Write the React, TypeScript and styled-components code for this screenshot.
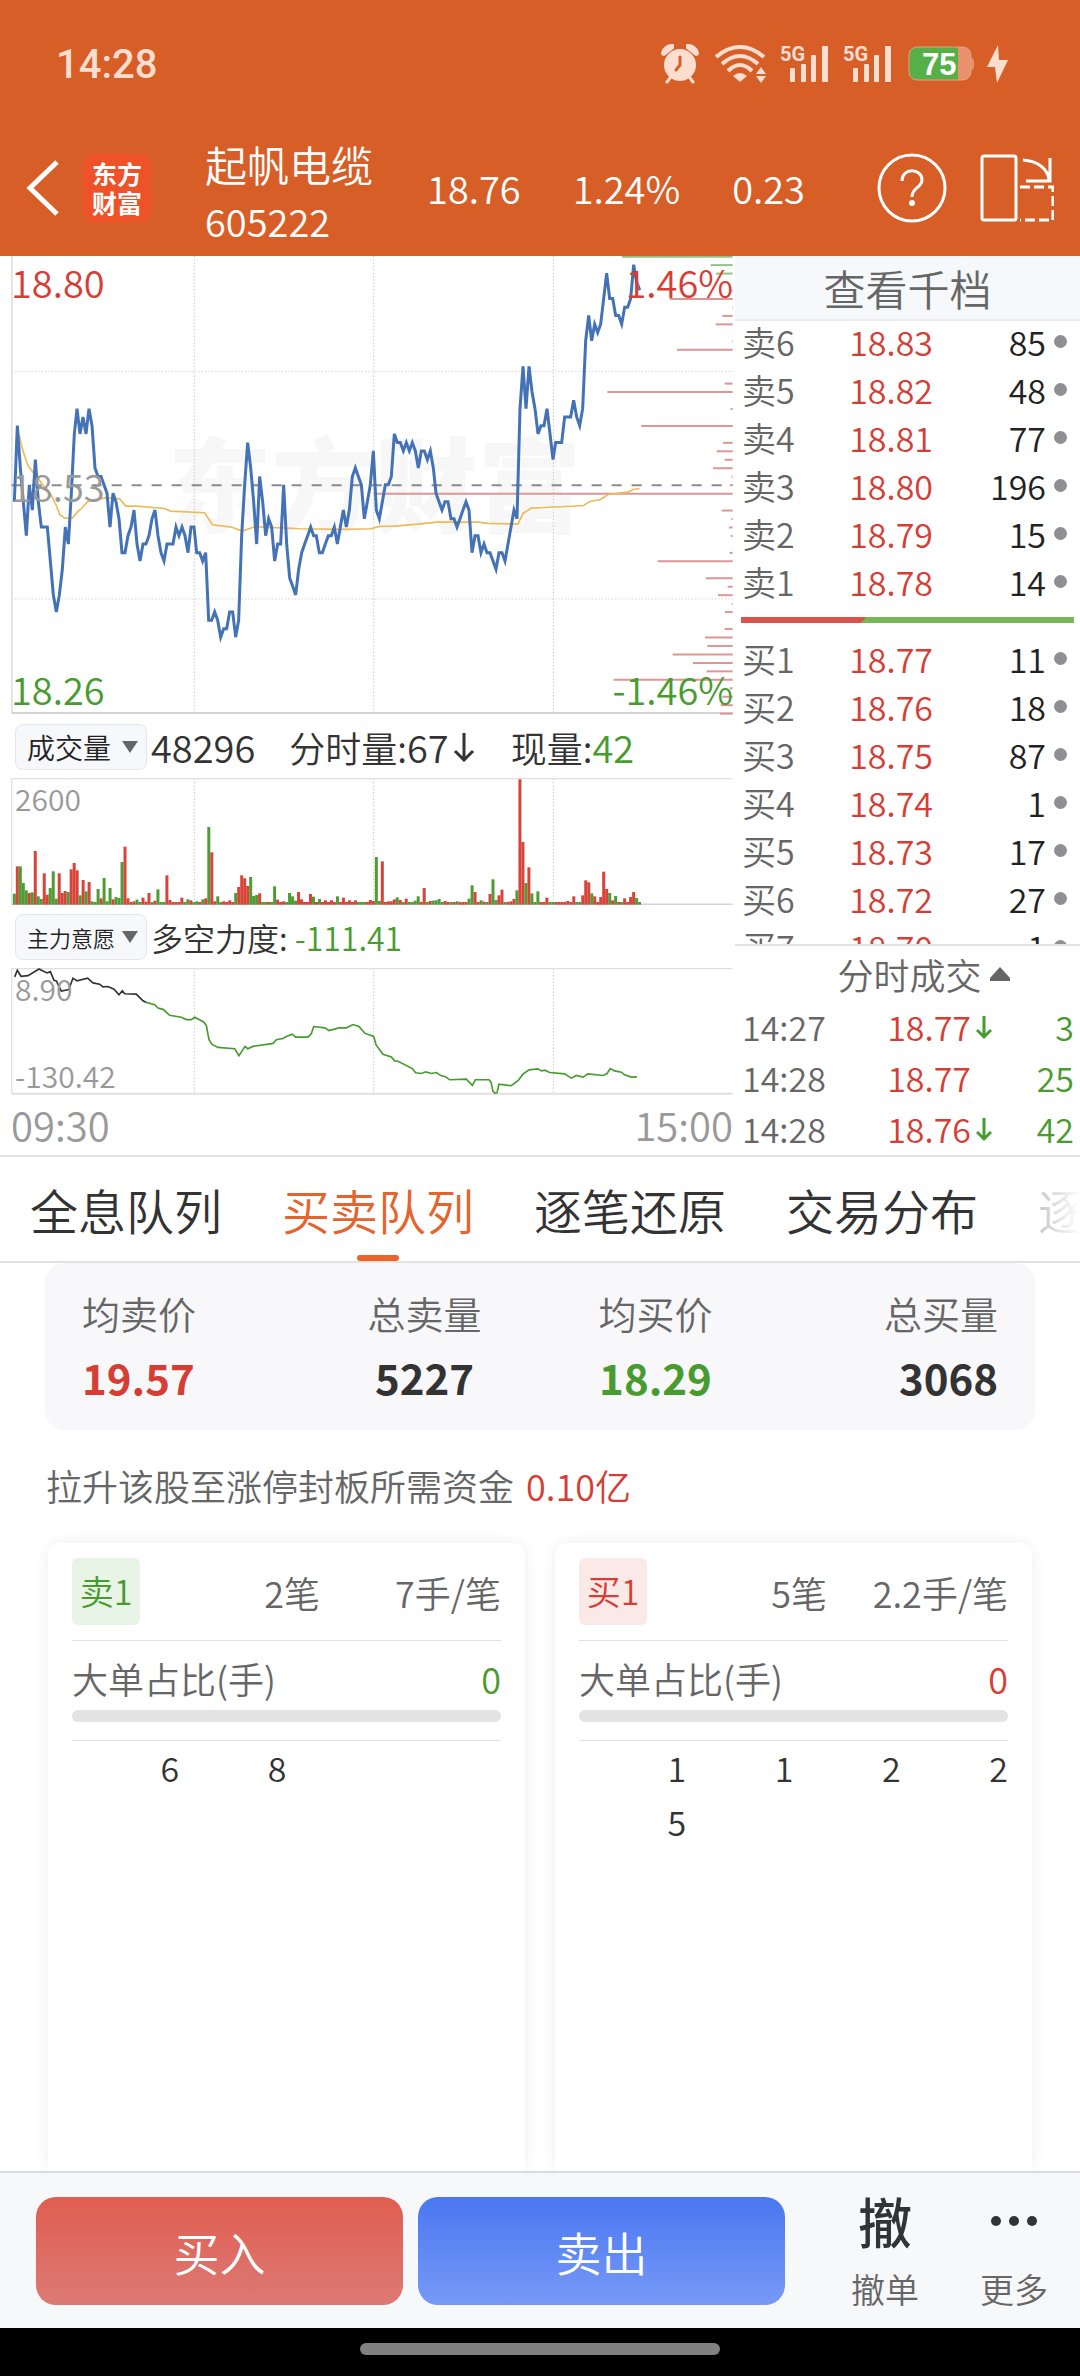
import React from "react";
import styled, { createGlobalStyle } from "styled-components";

const RED = "#d63d34";
const GREEN = "#489b2f";
const DARK = "#333333";
const GREY = "#666666";
const PALE = "#999999";
const LINE = "#e2e2e2";
const CREAM = "#fbded0";

const GlobalStyle = createGlobalStyle`
  *, *::before, *::after { box-sizing: border-box; }
  html, body { margin: 0; padding: 0; background: #ffffff; }
  body, button, select, table {
    font-family: "Noto Sans CJK SC", "Noto Sans", sans-serif;
    font-weight: 350;
  }
  button { margin: 0; padding: 0; border: 0; background: none; color: inherit; cursor: pointer; }
  ul, dl, dd, p, h1 { margin: 0; padding: 0; list-style: none; font-weight: inherit; }
  table { border-collapse: collapse; width: 100%; table-layout: fixed; }
  th, td { padding: 0; font-weight: inherit; }
  svg { display: block; }
`;

/* ---------- market data ---------- */

/* price of each minute, in cents away from the previous close */
const PREV_CLOSE = 18.53;
const PRICES = [
  -2, 7, 2, -2, -6, 0, -3, 3, -2, -5, -5, -5, -9, -13, -15, -13, -10, -5, -7, -1,
  6, 9, 6, 8, 6, 9, 7, 2, 1, 1, 0, -1, -5, -1, -2, -4, -8, -8, -6, -5,
  -3, -7, -9, -7, -7, -6, -4, -3, -6, -8, -9, -7, -7, -7, -5, -6, -5, -6, -8, -5,
  -5, -8, -8, -9, -8, -16, -16, -15, -16, -18, -17, -17, -15, -15, -18, -16, -6, 0, 5, 2,
  -2, -7, 1, -2, -6, -4, -5, -9, -7, -7, 0, -7, -11, -12, -13, -10, -8, -7, -6, -5,
  -6, -6, -8, -8, -7, -6, -6, -5, -7, -5, -3, -5, -3, 1, 2, 1, 0, -4, -2, 0,
  4, -3, -4, -2, 0, 0, 1, 6, 5, 5, 4, 5, 4, 5, 4, 2, 4, 4, 3, 4,
  2, -1, -2, -3, -2, -2, -4, -4, -5, -4, -3, -2, -3, -8, -6, -6, -8, -7, -8, -8,
  -9, -10, -8, -8, -9, -7, -5, -3, -4, 9, 14, 9, 14, 11, 9, 6, 7, 7, 9, 6,
  3, 5, 5, 5, 8, 8, 8, 10, 8, 7, 9, 17, 20, 17, 19, 18, 19, 22, 25, 22,
  22, 20, 20, 19, 21, 21, 22, 26, 24, 23,
];

const AVERAGE =
  "58,555 66,590 75,620 86,650 100,668 118,690 128,705 145,722 155,738 170,768 180,795 195,806 218,806 235,786 248,775 262,758 275,752 318,745 360,748 378,770 410,770 495,777 512,785 615,790 638,826 695,833 728,845 765,832 860,836 900,838 1040,840 1113,838 1140,831 1185,830 1255,824 1312,818 1435,818 1465,822 1555,824 1570,792 1595,776 1685,772 1752,768 1770,756 1802,750 1825,735 1885,728 1900,720 1920,717";

/* traded volume by price level: [level in cents, bar length] */
const LEVELS: [number, number][] = [
  [27, 332], [26, 66], [25, 50], [23, 4], [22, 189], [21, 2], [20, 31], [19, 51], [17, 2], [16, 167],
  [12, 24], [11, 376], [9, 6], [7, 274], [5, 29], [4, 48], [3, 24], [2, 59], [1, 3], [0, 9],
  [-1, 1077], [-3, 33], [-4, 4], [-5, 11], [-6, 6], [-8, 9], [-9, 225], [-11, 81], [-12, 15], [-13, 44],
  [-14, 3], [-15, 23], [-17, 24], [-18, 83], [-19, 76], [-20, 180], [-21, 119], [-22, 78], [-23, 357],
  [-24, 9], [-25, 31], [-26, 36], [-27, 38],
];

/* volume per minute: colour letter and bar height */
const VOLUMES = (
  "g33 r115 g115 g65 g43 r35 g37 r161 g25 g17 r94 r30 g50 g100 g18 r94 r35 r41 g38 r106 " +
  "r125 r103 g28 r74 g40 r68 g10 g8 g47 r19 g80 g10 g50 r16 g23 g20 g128 r174 r19 r8 " +
  "r10 g15 g8 r21 r9 r35 g8 r12 g46 g8 g8 r88 r14 r8 r8 r8 r21 g8 g16 r13 " +
  "g8 g10 r8 g16 r19 g233 r157 r10 g25 g8 r10 r8 r13 r8 g35 r53 r88 r79 r56 g83 " +
  "g26 g29 r34 g8 g8 r8 g8 g55 r15 r8 r10 g8 g35 g25 g12 r38 r16 r8 r8 r32 " +
  "g24 r8 g17 r8 r13 r8 r13 r8 g25 r8 r21 r8 r13 r8 r13 g8 g8 g8 r8 r14 " +
  "r11 g143 g11 r130 r8 r10 r10 r16 g22 r14 g8 r18 g8 g8 g12 g25 r8 r50 g8 r11 " +
  "g12 g13 g17 g8 r11 r8 g8 r8 g10 r8 r8 r8 g18 g58 r38 r8 g13 r9 g8 r32 " +
  "g76 g14 r28 r45 g8 r8 r10 r17 g43 r376 r188 g65 r112 g34 g8 g40 r8 r8 r21 g8 " +
  "g8 r8 r8 r8 r8 r11 r8 r25 g8 g8 r28 r73 r67 g34 r25 r8 r23 r99 r47 g35 " +
  "r13 g26 r8 g8 r19 r8 r23 r38 g20 g8"
).split(" ");

const WILL_POSITIVE =
  "45,828 53,808 64,826 85,824 118,804 142,816 152,812 163,838 170,840 185,871 208,866 213,850 220,832 232,840 264,832 280,846 300,850 310,858 325,857 343,865 358,882 368,870 375,879 410,880 430,900 440,905";
const WILL_NEGATIVE =
  "440,905 465,912 475,922 490,926 510,944 545,950 560,957 575,957 585,950 612,964 620,975 628,1018 637,1032 655,1041 705,1045 718,1066 736,1038 744,1045 760,1038 820,1029 830,1018 850,1014 860,1008 878,1001 888,1010 925,1010 935,1000 942,978 975,982 988,990 1018,982 1040,982 1060,972 1078,978 1095,998 1122,1008 1130,1035 1150,1062 1175,1070 1185,1082 1195,1083 1238,1105 1248,1118 1265,1120 1278,1115 1295,1120 1310,1117 1325,1127 1338,1130 1350,1139 1400,1137 1418,1156 1427,1139 1468,1139 1474,1146 1480,1174 1486,1180 1492,1178 1498,1152 1535,1157 1555,1142 1570,1122 1588,1109 1615,1106 1625,1112 1635,1110 1650,1117 1695,1121 1715,1134 1730,1126 1750,1131 1765,1121 1810,1126 1822,1120 1832,1105 1845,1112 1865,1116 1875,1124 1895,1131 1912,1130";

const ASKS = [
  ["卖6", "18.83", "85"], ["卖5", "18.82", "48"], ["卖4", "18.81", "77"],
  ["卖3", "18.80", "196"], ["卖2", "18.79", "15"], ["卖1", "18.78", "14"],
];
const BIDS = [
  ["买1", "18.77", "11"], ["买2", "18.76", "18"], ["买3", "18.75", "87"], ["买4", "18.74", "1"],
  ["买5", "18.73", "17"], ["买6", "18.72", "27"], ["买7", "18.70", "1"],
];
const TRADES = [
  { time: "14:27", price: "18.77", down: true, volume: "3" },
  { time: "14:28", price: "18.77", down: false, volume: "25" },
  { time: "14:28", price: "18.76", down: true, volume: "42" },
];
const TABS = ["全息队列", "买卖队列", "逐笔还原", "交易分布", "逐笔成交"];

/* ---------- page ---------- */

const Page = styled.div`
  display: flex;
  flex-direction: column;
  min-height: 100vh;
  overflow: hidden;
  color: ${DARK};
  background: #ffffff;
`;

const Top = styled.header`
  background: #d75e27;
  color: #ffffff;
`;

const StatusBar = styled.div`
  display: flex;
  align-items: center;
  height: 128px;
  padding: 0 72px 0 56px;
  color: ${CREAM};
`;

const Clock = styled.time`
  margin-right: auto;
  font-family: Roboto, sans-serif;
  font-size: 40px;
  font-weight: 500;
`;

const StatusIcons = styled.div`
  display: flex;
  align-items: center;
`;

const StatusIcon = styled.svg<{ $gap: number }>`
  margin-left: ${(p) => p.$gap}px;
`;

const TitleBar = styled.div`
  display: flex;
  align-items: center;
  height: 128px;
  padding: 0 26px 8px;
`;

const Logo = styled.div`
  display: grid;
  place-content: center;
  width: 68px;
  height: 68px;
  margin-left: 23px;
  border-radius: 12px;
  background: #ee5229;
  font-size: 25px;
  font-weight: 700;
  line-height: 29px;
`;

const StockName = styled.div`
  margin-left: 54px;
  padding-top: 8px;
`;

const Name = styled.h1`
  font-size: 42px;
  line-height: 58px;
`;

const Code = styled.p`
  font-size: 38px;
  line-height: 56px;
`;

const Quotes = styled.div`
  display: flex;
  flex: 1;
  justify-content: space-between;
  padding: 0 72px 0 54px;
  font-size: 38px;
  line-height: 56px;
`;

const IconButton = styled.button`
  display: block;
  & + & { margin-left: 33px; }
`;

/* ---------- market area ---------- */

const Market = styled.section`
  display: grid;
  grid-template-columns: minmax(0, 735fr) minmax(0, 345fr);
  border-bottom: 2px solid ${LINE};
`;

const Charts = styled.div`
  padding: 0 2px 0 11px;
`;

const Plot = styled.div<{ $height: number }>`
  position: relative;
  height: ${(p) => p.$height}px;
  > svg { width: 100%; height: 100%; }
`;

type Corner = "tl" | "tr" | "ml" | "bl" | "br";
const CORNERS: Record<Corner, string> = {
  tl: "left: 0; top: 0;",
  tr: "right: 0; top: 0;",
  ml: "left: 0; top: 50%; transform: translateY(-50%);",
  bl: "left: 0; bottom: 0;",
  br: "right: 0; bottom: 0;",
};

const PlotLabel = styled.span<{ $at: Corner; $color: string; $small?: boolean }>`
  position: absolute;
  ${(p) => CORNERS[p.$at]}
  color: ${(p) => p.$color};
  font-size: ${(p) => (p.$small ? 30 : 38)}px;
  line-height: ${(p) => (p.$small ? 40 : 52)}px;
  padding-left: ${(p) => (p.$small ? 4 : 0)}px;
`;

const IndicatorRow = styled.div<{ $size: number }>`
  display: flex;
  align-items: center;
  height: 63px;
  padding-left: 4px;
  font-size: ${(p) => p.$size}px;
  line-height: 54px;
  white-space: nowrap;
`;

const Picker = styled.label`
  position: relative;
  display: block;
  flex: none;
  width: 132px;
  height: 46px;
  margin-right: 4px;
  > svg { position: absolute; right: 9px; top: 17px; pointer-events: none; }
`;

const PickerSelect = styled.select<{ $size: number }>`
  display: block;
  width: 100%;
  height: 100%;
  padding: 0 0 0 11px;
  appearance: none;
  border: 1px solid #e3e6ea;
  border-radius: 8px;
  background: #f6f8fb;
  color: #222222;
  font-size: ${(p) => p.$size}px;
`;

const Reading = styled.span`
  display: flex;
  align-items: center;
  margin-right: 34px;
`;

const Figure = styled.span<{ $color?: string }>`
  color: ${(p) => p.$color ?? "inherit"};
  font-size: 38px;
`;

const Tone = styled.span<{ $color: string }>`
  color: ${(p) => p.$color};
`;

const TimeAxis = styled.div`
  display: flex;
  justify-content: space-between;
  height: 60px;
  color: ${PALE};
  font-size: 40px;
  line-height: 58px;
`;

const Side = styled.aside`
  display: flex;
  flex-direction: column;
  min-height: 0;
`;

const DepthButton = styled.button`
  flex: none;
  height: 65px;
  border-bottom: 2px solid #ececee;
  background: #f6f8fb;
  color: ${GREY};
  font-size: 42px;
  line-height: 62px;
`;

const Book = styled.div`
  flex: 1 1 0;
  min-height: 0;
  padding: 0 6px;
  overflow: hidden;
`;

const BookRow = styled.tr`
  height: 48px;
  font-size: 34px;
  line-height: 42px;
`;

const Cell = styled.td<{ $color: string; $width?: number; $right?: boolean }>`
  width: ${(p) => (p.$width ? p.$width + "px" : "auto")};
  padding-left: ${(p) => (p.$right ? 0 : 1)}px;
  color: ${(p) => p.$color};
  text-align: ${(p) => (p.$right ? "right" : "left")};
  vertical-align: top;
`;

const DotCell = styled.td`
  width: 28px;
  vertical-align: top;
  &::after {
    content: "";
    display: block;
    width: 13px;
    height: 13px;
    margin: 14px 0 0 8px;
    border-radius: 50%;
    background: #8f8f94;
  }
`;

const RatioBar = styled.div`
  height: 6px;
  margin: 8px 0 15px;
  background: linear-gradient(135deg, #d9534d 37%, #77b755 37%);
`;

const TradesTitle = styled.button`
  display: flex;
  flex: none;
  align-items: center;
  justify-content: center;
  gap: 8px;
  height: 58px;
  padding-left: 32px;
  border-top: 2px solid ${LINE};
  color: ${GREY};
  font-size: 36px;
`;

const Trades = styled.div`
  padding: 0 6px;
`;

const TradeRow = styled.tr`
  height: 51px;
  font-size: 34px;
  line-height: 50px;
`;

const ArrowCell = styled.td`
  width: 24px;
  padding: 14px 0 0 5px;
  vertical-align: top;
`;

/* ---------- tabs ---------- */

const Tabs = styled.nav`
  position: relative;
  display: flex;
  gap: 60px;
  height: 106px;
  padding-left: 30px;
  overflow: hidden;
  border-bottom: 2px solid ${LINE};
  &::after {
    content: "";
    position: absolute;
    inset: 0 0 0 auto;
    width: 60px;
    background: linear-gradient(90deg, rgba(255, 255, 255, 0.6), #ffffff);
    pointer-events: none;
  }
`;

const Tab = styled.button<{ $active: boolean }>`
  position: relative;
  flex: none;
  color: ${(p) => (p.$active ? "#e5642d" : DARK)};
  font-size: 48px;
  line-height: 104px;
  padding-bottom: 4px;
  white-space: nowrap;
  &::after {
    content: "";
    display: ${(p) => (p.$active ? "block" : "none")};
    position: absolute;
    left: 50%;
    bottom: 0;
    width: 42px;
    height: 6px;
    margin-left: -21px;
    border-radius: 3px;
    background: #ea642b;
  }
`;

/* ---------- queue ---------- */

const Content = styled.main`
  display: flex;
  flex: 1;
  flex-direction: column;
  padding: 0 45px;
`;

const Summary = styled.div`
  display: grid;
  grid-template-columns: 1fr 1fr;
  gap: 117px;
  height: 167px;
  padding: 20px 37px 0;
  border-radius: 20px;
  background: #f8f8fb;
`;

const SummaryPair = styled.dl`
  display: flex;
  justify-content: space-between;
`;

const SummaryItem = styled.div<{ $align: string }>`
  text-align: ${(p) => p.$align};
`;

const SummaryLabel = styled.dt`
  color: ${GREY};
  font-size: 38px;
  line-height: 60px;
`;

const SummaryValue = styled.dd<{ $color: string }>`
  color: ${(p) => p.$color};
  font-size: 42px;
  font-weight: 700;
  line-height: 68px;
`;

const Funds = styled.p`
  padding: 30px 0 0 1px;
  color: ${GREY};
  font-size: 36px;
  line-height: 50px;
  ${Tone} { margin-left: 12px; }
`;

const Cards = styled.div`
  display: grid;
  flex: 1;
  grid-template-columns: 1fr 1fr;
  gap: 30px;
  margin: 33px 3px 0;
`;

const Card = styled.section`
  padding: 15px 24px 0;
  border-radius: 12px 12px 0 0;
  background: #ffffff;
  box-shadow: 0 0 16px rgba(0, 0, 0, 0.07);
`;

const CardHead = styled.div`
  display: grid;
  grid-template-columns: 68px 1fr 181px;
  align-items: center;
  height: 83px;
  padding-bottom: 15px;
  border-bottom: 1px solid ${LINE};
  color: ${GREY};
  font-size: 36px;
  line-height: 66px;
  text-align: right;
`;

const Badge = styled.span<{ $buy: boolean }>`
  height: 67px;
  border-radius: 6px;
  background: ${(p) => (p.$buy ? "#fbe9e8" : "#e8f4e6")};
  color: ${(p) => (p.$buy ? RED : GREEN)};
  font-size: 34px;
  text-align: center;
`;

const ShareRow = styled.div`
  display: flex;
  justify-content: space-between;
  margin-top: 10px;
  color: ${GREY};
  font-size: 36px;
  line-height: 54px;
`;

const ShareTrack = styled.div`
  height: 12px;
  margin: 5px 0 18px;
  border-radius: 6px;
  background: #e3e3e3;
`;

const Orders = styled.ul`
  display: grid;
  grid-template-columns: repeat(4, 1fr);
  border-top: 1px solid ${LINE};
  font-size: 34px;
  line-height: 54px;
  text-align: right;
`;

/* ---------- bottom ---------- */

const Actions = styled.footer`
  position: relative;
  display: grid;
  grid-template-columns: 1fr 1fr 142px 114px;
  column-gap: 15px;
  align-items: center;
  height: 157px;
  padding: 0 9px 0 36px;
  border-top: 2px solid #d9dadc;
  background: #f6f8fa;
`;

const TradeButton = styled.button<{ $buy: boolean }>`
  height: 108px;
  border-radius: 20px;
  background: ${(p) =>
    p.$buy ? "linear-gradient(#e05d51, #dc7a74)" : "linear-gradient(#4a77f0, #779af8)"};
  color: #ffffff;
  font-size: 46px;
  line-height: 104px;
`;

const SmallAction = styled.button`
  display: flex;
  flex-direction: column;
  align-items: center;
  color: ${GREY};
  font-size: 34px;
  line-height: 52px;
  &:nth-of-type(3) { padding-left: 28px; }
`;

const Glyph = styled.span`
  display: grid;
  place-items: center;
  height: 76px;
  padding-bottom: 8px;
  color: ${DARK};
  font-size: 54px;
  font-weight: 500;
`;

const HomeArea = styled.div`
  display: flex;
  justify-content: center;
  height: 48px;
  padding-top: 15px;
  background: #000000;
  &::after {
    content: "";
    width: 360px;
    height: 12px;
    border-radius: 6px;
    background: #808080;
  }
`;

/* ---------- drawings ---------- */

const STEP = 2163 / 241;
const CENT = 1374 / 54;
const minuteX = (i: number) => 44 + i * STEP;
const centY = (c: number) => 706 - c * CENT;

function Grid({ top, bottom }: { top: number; bottom: number }) {
  return (
    <g stroke="#c4c4c4" strokeWidth="3" strokeDasharray="4 6">
      {[584, 1122, 1661].map((x) => (
        <line key={x} x1={x} x2={x} y1={top} y2={bottom} />
      ))}
    </g>
  );
}

function PriceChart() {
  return (
    <svg viewBox="34 18 2166 1380" preserveAspectRatio="none" role="img" aria-label="分时走势">
      <text x="505" y="828" fontSize="310" fontWeight="900" fill="#f7f7f8">东方财富</text>
      <Grid top={18} bottom={1392} />
      <g stroke="#d2d2d2" strokeWidth="3" strokeDasharray="4 6">
        <line x1="36" x2="2199" y1="365" y2="365" />
        <line x1="36" x2="2199" y1="1049" y2="1049" />
      </g>
      <line x1="36" x2="36" y1="18" y2="1392" stroke="#e0e0e0" strokeWidth="6" />
      <line x1="36" x2="2199" y1="1392" y2="1392" stroke="#d4d4d4" strokeWidth="6" />
      <line x1="36" x2="2199" y1="707" y2="707" stroke="#8a8a8a" strokeWidth="6" strokeDasharray="30 30" />
      {LEVELS.map(([c, w]) => (
        <line key={c} x1={2199 - w} x2="2199" y1={centY(c) + 1} y2={centY(c) + 1}
          stroke={c > 24 ? "#93c286" : "#dd9693"} strokeWidth="6" />
      ))}
      <polyline points={AVERAGE} fill="none" stroke="#ebbb59" strokeWidth="5" />
      <polyline
        points={PRICES.map((c, i) => `${minuteX(i).toFixed(0)},${centY(c).toFixed(0)}`).join(" ")}
        fill="none" stroke="#4372b6" strokeWidth="9" />
    </svg>
  );
}

function VolumeChart() {
  return (
    <svg viewBox="34 231 2166 381" preserveAspectRatio="none" role="img" aria-label="成交量">
      <Grid top={233} bottom={611} />
      <path d="M36 611V233H2199" fill="none" stroke="#e0e0e0" strokeWidth="4" />
      <line x1="36" x2="2199" y1="610" y2="610" stroke="#d4d4d4" strokeWidth="5" />
      {VOLUMES.map((v, i) => {
        const h = Number(v.slice(1));
        return <rect key={i} x={minuteX(i) - 4.5} y={611 - h} width="9" height={h}
          fill={v[0] === "r" ? "#d8433a" : "#4f9c35"} />;
      })}
    </svg>
  );
}

function WillChart() {
  return (
    <svg viewBox="34 801 2166 384" preserveAspectRatio="none" role="img" aria-label="主力意愿">
      <Grid top={802} bottom={1182} />
      <path d="M36 1182V803H2199" fill="none" stroke="#e0e0e0" strokeWidth="4" />
      <line x1="36" x2="2199" y1="1181" y2="1181" stroke="#e0e0e0" strokeWidth="6" />
      <polyline points={WILL_POSITIVE} fill="none" stroke="#333333" strokeWidth="5" />
      <polyline points={WILL_NEGATIVE} fill="none" stroke="#489b2f" strokeWidth="5" />
    </svg>
  );
}

function Signal({ gap }: { gap: number }) {
  return (
    <StatusIcon $gap={gap} width="49" height="50" viewBox="0 -6 49 50" fill={CREAM}>
      <text x="0" y="16" fontFamily="Roboto, sans-serif" fontSize="20" fontWeight="700">5G</text>
      <rect x="10" y="23" width="5" height="14" rx="1" />
      <rect x="21" y="19" width="5" height="18" rx="1" />
      <rect x="31" y="10" width="5" height="27" rx="1" />
      <rect x="42" y="1" width="6" height="36" rx="1" />
    </StatusIcon>
  );
}

function StatusGlyphs() {
  return (
    <StatusIcons>
      <StatusIcon $gap={0} width="38" height="40" viewBox="0 0 38 40" fill={CREAM}>
        <circle cx="19" cy="21" r="16" />
        <path d="M1 10A10 10 0 0 1 12 1L12 4 3 11zM37 10A10 10 0 0 0 26 1L26 4 35 11z" stroke={CREAM} strokeWidth="2" strokeLinejoin="round" />
        <path d="M9 34l-3 4M29 34l3 4" stroke={CREAM} strokeWidth="3" strokeLinecap="round" />
        <path d="M19 13v8l-4 5" fill="none" stroke="#d75e27" strokeWidth="3" strokeLinecap="round" />
      </StatusIcon>
      <StatusIcon $gap={16} width="54" height="38" viewBox="0 0 54 38" fill={CREAM}>
        <g fill="none" stroke={CREAM} strokeWidth="4">
          <path d="M1 12Q25 -8 49 12" />
          <path d="M7 19Q25 3 43 19" />
          <path d="M13 26Q25 14 37 26" />
        </g>
        <path d="M18 31Q25 25 32 31L25 37z" />
        <path d="M46 22l5 7h-10zM46 38l5-7h-10z" />
      </StatusIcon>
      <Signal gap={11} />
      <Signal gap={14} />
      <StatusIcon $gap={16} width="67" height="36" viewBox="0 0 67 36">
        <rect x="1" y="1" width="62" height="33" rx="8" fill="#e8916c" />
        <path d="M9 1H50V34H9A8 8 0 0 1 1 26V9A8 8 0 0 1 9 1z" fill="#57af48" />
        <rect x="1" y="1" width="62" height="33" rx="8" fill="none" stroke="#e4a07c" />
        <path d="M63 12q3 0 3 3v6q0 3-3 3z" fill="#e8916c" />
        <text x="14" y="29" fontFamily="Liberation Sans, sans-serif" fontSize="31" fontWeight="700" fill="#ffffff">75</text>
      </StatusIcon>
      <StatusIcon $gap={11} width="22" height="38" viewBox="0 0 22 38" fill={CREAM}>
        <path d="M12 0L1 22H9L11 38 22 15H13z" />
      </StatusIcon>
    </StatusIcons>
  );
}

function DownArrow() {
  return (
    <svg width="16" height="24" viewBox="0 0 16 24" fill="none" stroke={GREEN} strokeWidth="3">
      <path d="M8 0V21M1 14l7 7 7-7" />
    </svg>
  );
}

/* ---------- parts ---------- */

function BookTable({ rows, label }: { rows: string[][]; label: string }) {
  return (
    <table aria-label={label}>
      <tbody>
        {rows.map(([name, price, volume]) => (
          <BookRow key={name}>
            <Cell as="th" scope="row" $color={GREY} $width={92}>{name}</Cell>
            <Cell $color={RED} $right $width={100}>{price}</Cell>
            <Cell $color="#222222" $right>{volume}</Cell>
            <DotCell />
          </BookRow>
        ))}
      </tbody>
    </table>
  );
}

function IndicatorPicker({ value, size }: { value: string; size: number }) {
  return (
    <Picker>
      <PickerSelect $size={size} aria-label="指标" defaultValue={value}>
        <option>{value}</option>
      </PickerSelect>
      <svg width="16" height="12" viewBox="0 0 16 12" fill={GREY}><path d="M0 0H16L8 12z" /></svg>
    </Picker>
  );
}

interface QueueProps {
  buy: boolean;
  name: string;
  count: string;
  average: string;
  orders: string[];
}

function QueueCard({ buy, name, count, average, orders }: QueueProps) {
  return (
    <Card>
      <CardHead>
        <Badge $buy={buy}>{name}</Badge>
        <span>{count}</span>
        <span>{average}</span>
      </CardHead>
      <ShareRow>
        <span>大单占比(手)</span>
        <Tone $color={buy ? RED : GREEN}>0</Tone>
      </ShareRow>
      <ShareTrack />
      <Orders>
        {orders.map((n, i) => <li key={i}>{n}</li>)}
      </Orders>
    </Card>
  );
}

export default function App() {
  return (
    <Page>
      <GlobalStyle />
      <Top>
        <StatusBar>
          <Clock>14:28</Clock>
          <StatusGlyphs />
        </StatusBar>
        <TitleBar>
          <IconButton aria-label="返回">
            <svg width="34" height="56" viewBox="0 0 34 56" fill="none" stroke="#ffffff" strokeWidth="5">
              <path d="M31 2L4 28 31 54" />
            </svg>
          </IconButton>
          <Logo><span>东方</span><span>财富</span></Logo>
          <StockName>
            <Name>起帆电缆</Name>
            <Code>605222</Code>
          </StockName>
          <Quotes>
            <span>18.76</span>
            <span>1.24%</span>
            <span>0.23</span>
          </Quotes>
          <IconButton aria-label="帮助">
            <svg width="70" height="70" viewBox="0 0 70 70" fill="none" stroke="#ffffff" strokeWidth="3">
              <circle cx="35" cy="35" r="33" />
              <path d="M25 28C25 14 45 15 45 27C45 35 35 34 35 44" />
              <circle cx="35" cy="50" r="3" fill="#ffffff" stroke="none" />
            </svg>
          </IconButton>
          <IconButton aria-label="横屏">
            <svg width="74" height="68" viewBox="0 0 74 68" fill="none" stroke="#ffffff" strokeWidth="3">
              <rect x="2" y="2" width="34" height="64" rx="2" />
              <path d="M43 6C58 7 68 15 69 26M70 4V27H46" />
              <path d="M40 33H73V66H40" strokeDasharray="10 4" />
            </svg>
          </IconButton>
        </TitleBar>
      </Top>

      <Market>
        <Charts>
          <Plot $height={459}>
            <PriceChart />
            <PlotLabel $at="tl" $color={RED}>18.80</PlotLabel>
            <PlotLabel $at="tr" $color={RED}>1.46%</PlotLabel>
            <PlotLabel $at="ml" $color={PALE}>{PREV_CLOSE}</PlotLabel>
            <PlotLabel $at="bl" $color={GREEN}>18.26</PlotLabel>
            <PlotLabel $at="br" $color={GREEN}>-1.46%</PlotLabel>
          </Plot>
          <IndicatorRow $size={36}>
            <IndicatorPicker value="成交量" size={28} />
            <Reading><Figure>48296</Figure></Reading>
            <Reading>
              分时量:<Figure>67</Figure>
              <svg width="28" height="30" viewBox="0 0 28 30" fill="none" stroke={DARK} strokeWidth="3">
                <path d="M15 1V28M6 19l9 9 9-9" />
              </svg>
            </Reading>
            <Reading>现量:<Figure $color={GREEN}>42</Figure></Reading>
          </IndicatorRow>
          <Plot $height={127}>
            <VolumeChart />
            <PlotLabel $at="tl" $color={PALE} $small>2600</PlotLabel>
          </Plot>
          <IndicatorRow $size={32}>
            <IndicatorPicker value="主力意愿" size={22} />
            <span>多空力度: <Tone $color={GREEN}>-111.41</Tone></span>
          </IndicatorRow>
          <Plot $height={127}>
            <WillChart />
            <PlotLabel $at="tl" $color={PALE} $small>8.90</PlotLabel>
            <PlotLabel $at="bl" $color={PALE} $small>-130.42</PlotLabel>
          </Plot>
          <TimeAxis><span>09:30</span><span>15:00</span></TimeAxis>
        </Charts>

        <Side>
          <DepthButton>查看千档</DepthButton>
          <Book>
            <BookTable rows={ASKS} label="卖盘" />
            <RatioBar />
            <BookTable rows={BIDS} label="买盘" />
          </Book>
          <TradesTitle>
            分时成交
            <svg width="20" height="14" viewBox="0 0 20 14" fill={GREY}><path d="M10 0L20 11V14H0V11z" /></svg>
          </TradesTitle>
          <Trades>
            <table aria-label="分时成交">
              <tbody>
                {TRADES.map((t, i) => (
                  <TradeRow key={i}>
                    <Cell $color={GREY} $width={110}>{t.time}</Cell>
                    <Cell $color={RED} $right $width={120}>{t.price}</Cell>
                    <ArrowCell>{t.down && <DownArrow />}</ArrowCell>
                    <Cell $color={GREEN} $right>{t.volume}</Cell>
                  </TradeRow>
                ))}
              </tbody>
            </table>
          </Trades>
        </Side>
      </Market>

      <Tabs>
        {TABS.map((t, i) => <Tab key={t} $active={i === 1}>{t}</Tab>)}
      </Tabs>

      <Content>
        <Summary>
          <SummaryPair>
            <SummaryItem $align="left">
              <SummaryLabel>均卖价</SummaryLabel>
              <SummaryValue $color={RED}>19.57</SummaryValue>
            </SummaryItem>
            <SummaryItem $align="center">
              <SummaryLabel>总卖量</SummaryLabel>
              <SummaryValue $color={DARK}>5227</SummaryValue>
            </SummaryItem>
          </SummaryPair>
          <SummaryPair>
            <SummaryItem $align="center">
              <SummaryLabel>均买价</SummaryLabel>
              <SummaryValue $color={GREEN}>18.29</SummaryValue>
            </SummaryItem>
            <SummaryItem $align="right">
              <SummaryLabel>总买量</SummaryLabel>
              <SummaryValue $color={DARK}>3068</SummaryValue>
            </SummaryItem>
          </SummaryPair>
        </Summary>
        <Funds>拉升该股至涨停封板所需资金<Tone $color={RED}>0.10亿</Tone></Funds>
        <Cards>
          <QueueCard buy={false} name="卖1" count="2笔" average="7手/笔" orders={["6", "8"]} />
          <QueueCard buy name="买1" count="5笔" average="2.2手/笔" orders={["1", "1", "2", "2", "5"]} />
        </Cards>
      </Content>

      <Actions>
        <TradeButton $buy>买入</TradeButton>
        <TradeButton $buy={false}>卖出</TradeButton>
        <SmallAction><Glyph>撤</Glyph>撤单</SmallAction>
        <SmallAction>
          <Glyph>
            <svg width="46" height="10" viewBox="0 0 46 10" fill={DARK}>
              <circle cx="5" cy="5" r="5" /><circle cx="23" cy="5" r="5" /><circle cx="41" cy="5" r="5" />
            </svg>
          </Glyph>
          更多
        </SmallAction>
      </Actions>
      <HomeArea />
    </Page>
  );
}
